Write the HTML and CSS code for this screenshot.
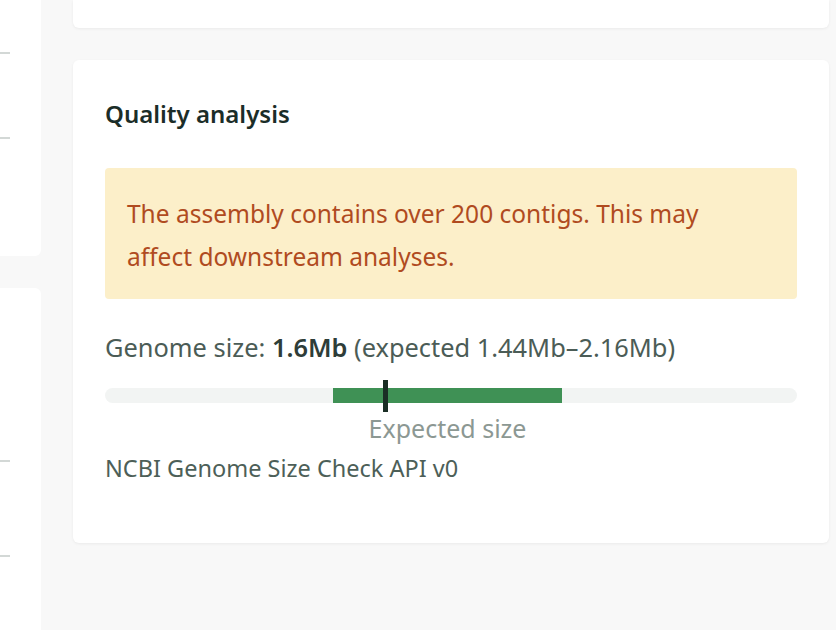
FILE: index.html
```html
<!DOCTYPE html>
<html lang="en">

<head>
    <meta charset="UTF-8">
    <meta name="viewport" content="width=device-width, initial-scale=1.0">
    <title>Assembly Quality</title>
    <link rel="stylesheet" href="styles.css">
</head>

<body>
    <div class="layout">
        <!-- Sidebar (scrolled, only its edge is visible) -->
        <aside class="sidebar">
            <div class="side-panel side-panel-first">
                <div class="side-row" style="height: 54px;"></div>
                <div class="side-row" style="height: 85px;"></div>
                <div class="side-rest"></div>
            </div>
            <div class="side-panel side-panel-second">
                <div class="side-row" style="height: 174px;"></div>
                <div class="side-row" style="height: 95px;"></div>
                <div class="side-rest"></div>
            </div>
        </aside>

        <main class="content">
            <div class="card card-top"></div>

            <section class="card quality">
                <h2 class="quality-title">Quality analysis</h2>

                <div class="warning">
                    The assembly contains over 200 contigs. This may affect downstream analyses.
                </div>

                <p class="genome-size">
                    Genome size: <strong>1.6Mb</strong> (expected 1.44Mb&ndash;2.16Mb)
                </p>

                <div class="size-chart">
                    <div class="size-track">
                        <div class="size-range" style="margin-left: 32.95%; width: 33.1%;"></div>
                    </div>
                    <div class="size-marker" style="left: 40.2%;"></div>
                    <div class="size-label-row">
                        <span class="size-label" style="margin-left: 32.95%; width: 33.1%;">Expected size</span>
                    </div>
                </div>

                <p class="source">NCBI Genome Size Check API v0</p>
            </section>
        </main>
    </div>
</body>

</html>
```

FILE: styles.css
```css
body {
    margin: 0;
    padding: 0;
    background-color: #f8f8f8;
    font-family: 'Noto Sans', 'Open Sans', sans-serif;
    color: #4b5c56;
    overflow: hidden;
}

.layout {
    display: flex;
    height: 630px;
}

/* Sidebar edge */
.sidebar {
    width: 41px;
    display: flex;
    flex-direction: column;
    gap: 32px;
    flex-shrink: 0;
}

.side-panel {
    background-color: #fff;
    padding-right: 31px;
    display: flex;
    flex-direction: column;
}

.side-panel-first {
    height: 256px;
    border-radius: 0 0 6px 0;
}

.side-panel-second {
    flex: 1;
    border-radius: 0 6px 0 0;
}

.side-row {
    border-bottom: 2px solid #d3d8d6;
    box-sizing: border-box;
}

/* Main column */
.content {
    width: 756px;
    margin-left: 32px;
    display: flex;
    flex-direction: column;
    gap: 32px;
}

.card {
    background-color: #fff;
    border-radius: 6px;
    box-shadow: 0 1px 3px rgba(0, 0, 0, 0.06);
}

.card-top {
    height: 28px;
    border-radius: 0 0 6px 6px;
}

.quality {
    padding: 38px 32px 57px;
}

.quality-title {
    margin: 0;
    font-size: 24px;
    line-height: 32px;
    font-weight: 600;
    color: #1b2d28;
}

.warning {
    margin-top: 38px;
    padding: 24px 40px 21px 22px;
    background-color: #fcefc9;
    border-radius: 4px;
    color: #b04b1f;
    font-size: 24.5px;
    line-height: 43px;
}

.genome-size {
    margin: 28px 0 0;
    font-size: 25.4px;
    line-height: 40px;
}

.genome-size strong {
    font-weight: 600;
    color: #2e3d38;
}

.size-chart {
    position: relative;
    margin-top: 21px;
}

.size-track {
    height: 15px;
    background-color: #f2f4f3;
    border-radius: 8px;
    display: flex;
}

.size-range {
    background-color: #3f9155;
}

.size-marker {
    position: absolute;
    top: -8px;
    width: 5px;
    height: 32px;
    background-color: #1a2e25;
}

.size-label-row {
    display: flex;
    padding-top: 7px;
}

.size-label {
    text-align: center;
    font-size: 25px;
    line-height: 36px;
    color: #8c9893;
    white-space: nowrap;
}

.source {
    margin: 4px 0 0;
    font-size: 23.5px;
    line-height: 36px;
    color: #4d5f58;
}
```
